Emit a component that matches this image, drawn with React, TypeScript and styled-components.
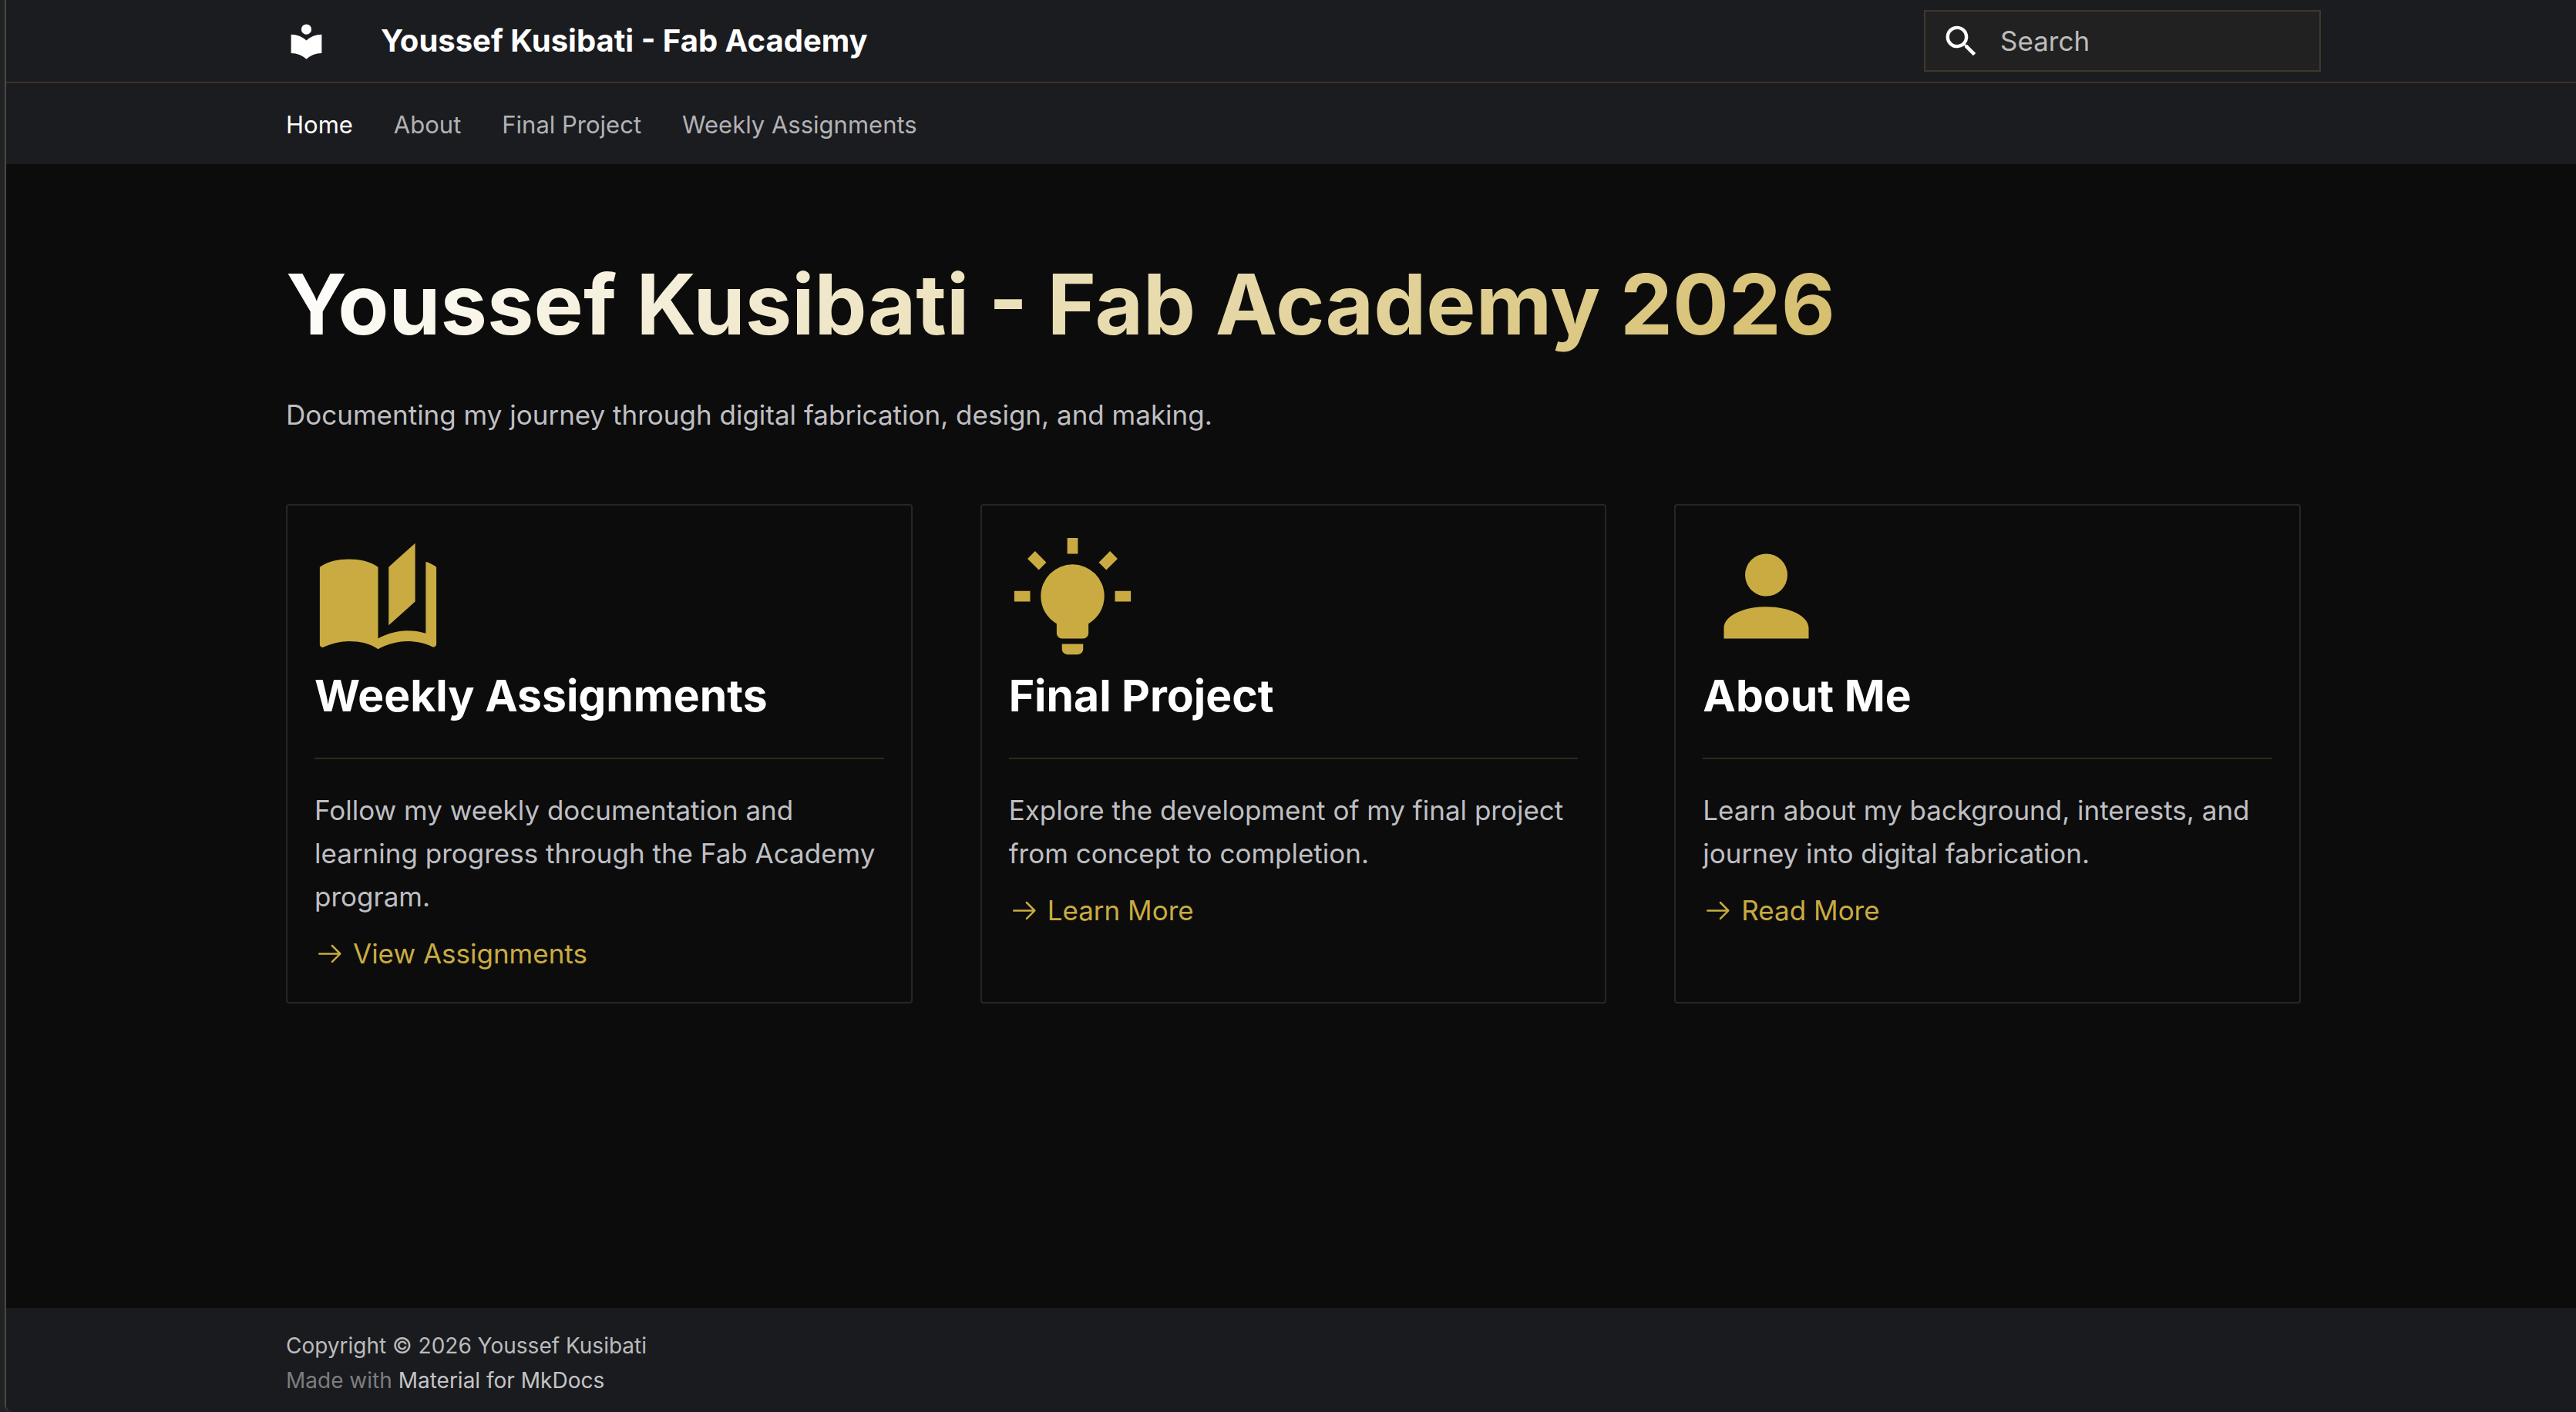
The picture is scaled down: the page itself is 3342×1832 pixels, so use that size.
import React from "react";
import styled, { createGlobalStyle } from "styled-components";

const GlobalStyle = createGlobalStyle`
  *, *::before, *::after { box-sizing: border-box; }
  body {
    margin: 0;
    background: #222222;
    color: #bfbfc3;
    font-family: Inter, "Liberation Sans", sans-serif;
    font-size: 35px;
    line-height: 56px;
    overflow-x: hidden;
  }
  h1, h2, p, ul { margin: 0; padding: 0; }
  a { color: inherit; text-decoration: none; }
`;

/* Browser window edge: a thin light rule down the left side of the page. */
const Page = styled.div`
  display: flex;
  flex-direction: column;
  min-height: 100vh;
  margin: 0 -6px 0 6px;
  border-left: 2px solid #484848;
  border-bottom-left-radius: 10px;
  background: #0c0c0c;
  overflow: hidden;
`;

const Grid = styled.div`
  width: 100%;
  max-width: 2684px;
  margin: 0 auto;
  padding: 0 35px;
`;

const Header = styled.header`
  background: #1b1c20;
  border-bottom: 2px solid #3b3429;
`;

const HeaderInner = styled(Grid)`
  display: flex;
  align-items: center;
  height: 106px;
  padding-right: 9px;
`;

const Logo = styled.a`
  display: flex;
  margin-right: 70px;
  color: #ffffff;
`;

const Icon = styled.svg<{ $size: number }>`
  display: block;
  flex: none;
  width: ${(p) => p.$size}px;
  height: ${(p) => p.$size}px;
  fill: currentColor;
`;

const SiteTitle = styled.span`
  flex: 1;
  color: #ffffff;
  font-size: 40px;
  font-weight: 700;
`;

const Search = styled.label`
  display: flex;
  align-items: center;
  gap: 24px;
  width: 515px;
  height: 80px;
  padding: 0 20px;
  border: 2px solid #40382a;
  background: #212121;
  color: #ffffff;
`;

const SearchInput = styled.input`
  flex: 1;
  min-width: 0;
  padding: 0;
  border: 0;
  outline: 0;
  background: transparent;
  color: #ffffff;
  font: inherit;
  &::placeholder { color: #bcbcbc; opacity: 1; }
`;

const Tabs = styled.nav`
  background: #1b1c20;
`;

const TabList = styled.ul`
  display: flex;
  gap: 53px;
  padding: 26px 0 23px;
  list-style: none;
`;

const Tab = styled.a<{ $active?: boolean }>`
  display: block;
  color: ${(p) => (p.$active ? "#ffffff" : "#b2b2b5")};
  font-size: 31px;
`;

const Main = styled.main`
  flex: 1;
  padding: 110px 0 88px;
`;

const Title = styled.h1`
  margin-bottom: 44px;
  background: linear-gradient(135deg, #ffffff 0%, #c9ab42 100%);
  background-clip: text;
  -webkit-background-clip: text;
  color: transparent;
  font-size: 108px;
  font-weight: 700;
  line-height: 143px;
`;

const Cards = styled.ul`
  display: grid;
  grid-template-columns: repeat(3, minmax(0, 1fr));
  gap: 88px;
  margin-top: 88px;
  list-style: none;
`;

const Card = styled.li`
  padding: 35px;
  border: 2px solid #262628;
  border-radius: 4px;
`;

const CardIcon = styled.div`
  margin-bottom: 12px;
  color: #c9ab42;
`;

const CardTitle = styled.h2`
  color: #ffffff;
  font-size: 57px;
  font-weight: 700;
  line-height: 70px;
`;

const Divider = styled.hr`
  margin: 45px 0 38px;
  border: 0;
  border-top: 2px solid #2e2a1c;
`;

const CardLink = styled.a`
  display: flex;
  align-items: center;
  gap: 10px;
  width: fit-content;
  margin-top: 18px;
  && { color: #c9ab42; }
`;

const Footer = styled.footer`
  padding: 27px 0 18px;
  background: #1a1b1e;
  font-size: 28px;
  line-height: 45px;
`;

const Copyright = styled.p`
  color: #babbbd;
`;

const Credit = styled.p`
  color: #7c7d80;
  a { color: #c4c4c7; }
`;

const icons = {
  library:
    "M12 8a3 3 0 0 0 3-3 3 3 0 0 0-3-3 3 3 0 0 0-3 3 3 3 0 0 0 3 3m0 3.54C9.64 9.35 6.5 8 3 8v11c3.5 0 6.64 1.35 9 3.54 2.36-2.19 5.5-3.54 9-3.54V8c-3.5 0-6.64 1.35-9 3.54z",
  search:
    "M9.5 3A6.5 6.5 0 0 1 16 9.5c0 1.61-.59 3.09-1.56 4.23l.27.27h.79l5 5-1.5 1.5-5-5v-.79l-.27-.27A6.516 6.516 0 0 1 9.5 16 6.5 6.5 0 0 1 3 9.5 6.5 6.5 0 0 1 9.5 3m0 2C7 5 5 7 5 9.5S7 14 9.5 14 14 12 14 9.5 12 5 9.5 5z",
  book:
    "M19 2l-5 4.5v11l5-4.5V2M6.5 5C4.55 5 2.45 5.4 1 6.5v14.66c0 .25.25.5.5.5.1 0 .15-.07.25-.07 1.35-.65 3.3-1.09 4.75-1.09 1.95 0 4.05.4 5.5 1.5 1.35-.85 3.8-1.5 5.5-1.5 1.65 0 3.35.31 4.75 1.06.1.05.15.03.25.03.25 0 .5-.25.5-.5V6.5c-.6-.45-1.25-.75-2-1V19c-1.1-.35-2.3-.5-3.5-.5-1.7 0-4.15.65-5.5 1.5V6.5C10.55 5.4 8.45 5 6.5 5z",
  bulb:
    "M12 6a6 6 0 0 1 6 6c0 2.22-1.21 4.16-3 5.2V19a1 1 0 0 1-1 1h-4a1 1 0 0 1-1-1v-1.8c-1.79-1.04-3-2.98-3-5.2a6 6 0 0 1 6-6m2 15v1a1 1 0 0 1-1 1h-2a1 1 0 0 1-1-1v-1h4m6-10h3v2h-3v-2M1 11h3v2H1v-2M13 1v3h-2V1h2M4.92 3.5l2.13 2.14-1.42 1.41L3.5 4.93 4.92 3.5m12.03 2.13 2.12-2.13 1.43 1.43-2.13 2.12-1.42-1.42z",
  account:
    "M12 4a4 4 0 0 1 4 4 4 4 0 0 1-4 4 4 4 0 0 1-4-4 4 4 0 0 1 4-4m0 10c4.42 0 8 1.79 8 4v2H4v-2c0-2.21 3.58-4 8-4z",
  arrow:
    "M13.22 19.03a.75.75 0 0 1 0-1.06L18.19 13H3.75a.75.75 0 0 1 0-1.5h14.44l-4.97-4.97a.749.749 0 0 1 .326-1.275.749.749 0 0 1 .734.215l6.25 6.25a.75.75 0 0 1 0 1.06l-6.25 6.25a.75.75 0 0 1-1.06 0z",
};

type IconName = keyof typeof icons;

const Glyph = ({ name, size }: { name: IconName; size: number }) => (
  <Icon $size={size} viewBox="0 0 24 24" aria-hidden="true">
    <path d={icons[name]} />
  </Icon>
);

const tabs = ["Home", "About", "Final Project", "Weekly Assignments"];

const cards: { icon: IconName; title: string; text: string; link: string }[] = [
  {
    icon: "book",
    title: "Weekly Assignments",
    text: "Follow my weekly documentation and learning progress through the Fab Academy program.",
    link: "View Assignments",
  },
  {
    icon: "bulb",
    title: "Final Project",
    text: "Explore the development of my final project from concept to completion.",
    link: "Learn More",
  },
  {
    icon: "account",
    title: "About Me",
    text: "Learn about my background, interests, and journey into digital fabrication.",
    link: "Read More",
  },
];

export default function App() {
  return (
    <>
      <GlobalStyle />
      <Page>
        <Header>
          <HeaderInner>
            <Logo href="#" aria-label="Youssef Kusibati - Fab Academy">
              <Glyph name="library" size={53} />
            </Logo>
            <SiteTitle>Youssef Kusibati - Fab Academy</SiteTitle>
            <Search>
              <Glyph name="search" size={53} />
              <SearchInput type="text" placeholder="Search" aria-label="Search" />
            </Search>
          </HeaderInner>
        </Header>
        <Tabs aria-label="Tabs">
          <Grid>
            <TabList>
              {tabs.map((tab, i) => (
                <li key={tab}>
                  <Tab href="#" $active={i === 0}>{tab}</Tab>
                </li>
              ))}
            </TabList>
          </Grid>
        </Tabs>
        <Main>
          <Grid>
            <Title>Youssef Kusibati - Fab Academy 2026</Title>
            <p>Documenting my journey through digital fabrication, design, and making.</p>
            <Cards>
              {cards.map((card) => (
                <Card key={card.title}>
                  <CardIcon>
                    <Glyph name={card.icon} size={165} />
                  </CardIcon>
                  <CardTitle>{card.title}</CardTitle>
                  <Divider />
                  <p>{card.text}</p>
                  <CardLink href="#">
                    <Glyph name="arrow" size={40} />
                    {card.link}
                  </CardLink>
                </Card>
              ))}
            </Cards>
          </Grid>
        </Main>
        <Footer>
          <Grid>
            <Copyright>Copyright © 2026 Youssef Kusibati</Copyright>
            <Credit>
              Made with <a href="#">Material for MkDocs</a>
            </Credit>
          </Grid>
        </Footer>
      </Page>
    </>
  );
}
